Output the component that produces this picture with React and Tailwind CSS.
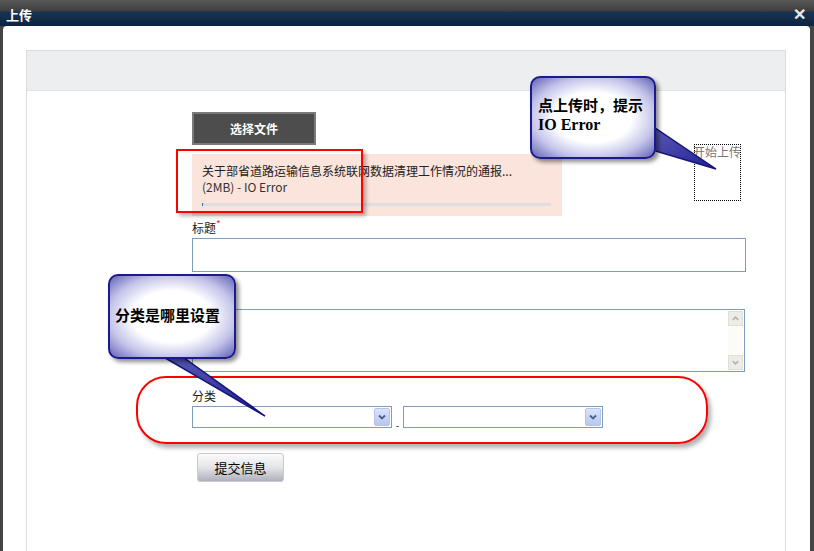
import React from 'react'

const font = { fontFamily: '"Noto Sans CJK SC", "Noto Sans", sans-serif' }

function Chevron({ className = '' }) {
  return (
    <svg viewBox="0 0 10 10" className={className}>
      <path d="M2 3.5 L5 6.5 L8 3.5" fill="none" stroke="#4d6185" strokeWidth="1.8" />
    </svg>
  )
}

function Select() {
  return (
    <div className="w-[200px] h-[22px] border border-[#7f9db9] bg-white flex justify-end items-center pr-[1px]">
      <div className="w-[16px] h-[18px] rounded-[2px] bg-[linear-gradient(#d9e3fb,#b5c8f2)] border border-[#b3c4ea] flex items-center justify-center">
        <Chevron className="w-[10px] h-[10px]" />
      </div>
    </div>
  )
}

function Callout({ className, children }) {
  return (
    <div
      className={`absolute rounded-[10px] border-2 border-[#1b1b8c] bg-[radial-gradient(ellipse_at_center,#ffffff_45%,#c4c4ea_72%,#6262b8_100%)] shadow-[3px_3px_4px_rgba(0,0,0,0.45)] font-bold text-[15px] leading-[20px] text-black ${className}`}
    >
      {children}
    </div>
  )
}

export default function App() {
  return (
    <div className="relative w-[814px] h-[551px] overflow-hidden bg-[#454545] flex flex-col text-[12px] text-[#222]" style={font}>
      {/* title bar */}
      <div className="h-[26px] shrink-0 bg-[linear-gradient(#595959_0%,#3e3e3e_42%,#183453_48%,#0c2340_100%)] flex items-center justify-between pl-[6px] pr-[8px]">
        <span className="text-white font-bold text-[13px] leading-none mt-[2px]">上传</span>
        <span className="text-[#e8e8e8] font-bold text-[16px] leading-none">✕</span>
      </div>

      {/* dialog body */}
      <div className="flex-1 flex">
        <div className="ml-[3px] w-[807px] bg-white rounded-t-[4px] pt-[24px] pl-[23px] flex">
          <div className="w-[760px] border border-[#dcdcdc] border-b-0 flex flex-col">
            <div className="h-[40px] bg-[#edeef0] border-b border-[#e4e4e4]" />
            <div className="pl-[165px] pr-[40px] flex flex-col">
              <div className="flex">
                <div className="flex flex-col w-[370px]">
                  <div className="mt-[21px] w-[124px] h-[33px] bg-[#4d4d4d] border-2 border-[#7a7a7a] flex items-center justify-center text-white font-bold text-[12px]">
                    选择文件
                  </div>
                  <div className="mt-[9px] h-[62px] bg-[#fbe4dc] pl-[10px] pr-[11px] pt-[9px] flex flex-col">
                    <div className="leading-[16px] text-[#222] whitespace-nowrap">关于部省道路运输信息系统联网数据清理工作情况的通报...</div>
                    <div className="leading-[16px] text-[#333]">(2MB) - IO Error</div>
                    <div className="mt-[8px] h-[3px] bg-[#dedede] flex">
                      <div className="w-[1px] bg-[#1e7bd6]" />
                    </div>
                  </div>
                </div>
                <div className="ml-[132px] mt-[53px] w-[47px] h-[57px] border border-dotted border-black text-[#777] text-[12px] leading-[14px] whitespace-nowrap">
                  <span className="-ml-[2px]">开始上传</span>
                </div>
              </div>

              <div className="mt-[4px] leading-[16px] flex">
                标题<span className="text-[#ff2a2a] text-[10px] leading-none -mt-[1px]">*</span>
              </div>
              <div className="mt-[2px] w-[554px] h-[34px] border border-[#7f9db9]" />

              <div className="mt-[10px] h-[16px] leading-[16px]">内容</div>
              <div className="mt-[11px] w-[553px] h-[63px] border border-[#7f9db9] flex justify-end p-[1px]">
                <div className="w-[15px] flex flex-col justify-between bg-[#fbfbf7]">
                  <div className="h-[15px] bg-[#eeede5] border border-[#dfdfd5] flex items-center justify-center">
                    <Chevron className="w-[9px] h-[9px] rotate-180 opacity-40" />
                  </div>
                  <div className="h-[15px] bg-[#eeede5] border border-[#dfdfd5] flex items-center justify-center">
                    <Chevron className="w-[9px] h-[9px] opacity-40" />
                  </div>
                </div>
              </div>

              <div className="mt-[16px] leading-[16px]">分类</div>
              <div className="mt-[2px] flex items-end">
                <Select />
                <span className="w-[11px] text-center leading-[6px] text-[10px]">-</span>
                <Select />
              </div>

              <div className="mt-[25px] ml-[5px] w-[87px] h-[29px] rounded-[3px] border border-[#c9c9cf] bg-[linear-gradient(#fbfbfc,#e4e4e8_50%,#aeb0bc)] flex items-center justify-center text-[13px] text-black">
                提交信息
              </div>
            </div>
          </div>
        </div>
      </div>

      {/* annotations */}
      <div className="absolute left-[176px] top-[149px] w-[187px] h-[64px] border-2 border-[#ff0000] shadow-[3px_3px_4px_rgba(0,0,0,0.3)]" />
      <div className="absolute left-[136px] top-[376px] w-[572px] h-[68px] border-2 border-[#ff0000] rounded-[30px] shadow-[3px_4px_4px_rgba(0,0,0,0.3)]" />

      <svg className="absolute left-0 top-0 w-[814px] h-[551px] pointer-events-none" viewBox="0 0 814 551">
        <defs>
          <linearGradient id="tail" x1="0" y1="0" x2="1" y2="1">
            <stop offset="0" stopColor="#5d5db8" />
            <stop offset="1" stopColor="#1e1e90" />
          </linearGradient>
        </defs>
        <polygon points="652,126 652,150 716,169" fill="url(#tail)" stroke="#14147e" strokeWidth="1.5" />
        <polygon points="160,355 180,355 265,416" fill="url(#tail)" stroke="#14147e" strokeWidth="1.5" />
      </svg>

      <Callout className="left-[530px] top-[76px] w-[126px] h-[83px] pl-[6px] pt-[17px]">
        <div>点上传时，提示</div>
        <div className="text-[16px]" style={{ fontFamily: '"Liberation Serif", serif' }}>IO Error</div>
      </Callout>
      <Callout className="left-[108px] top-[274px] w-[128px] h-[85px] pl-[5px] pt-[29px]">
        分类是哪里设置
      </Callout>
    </div>
  )
}
